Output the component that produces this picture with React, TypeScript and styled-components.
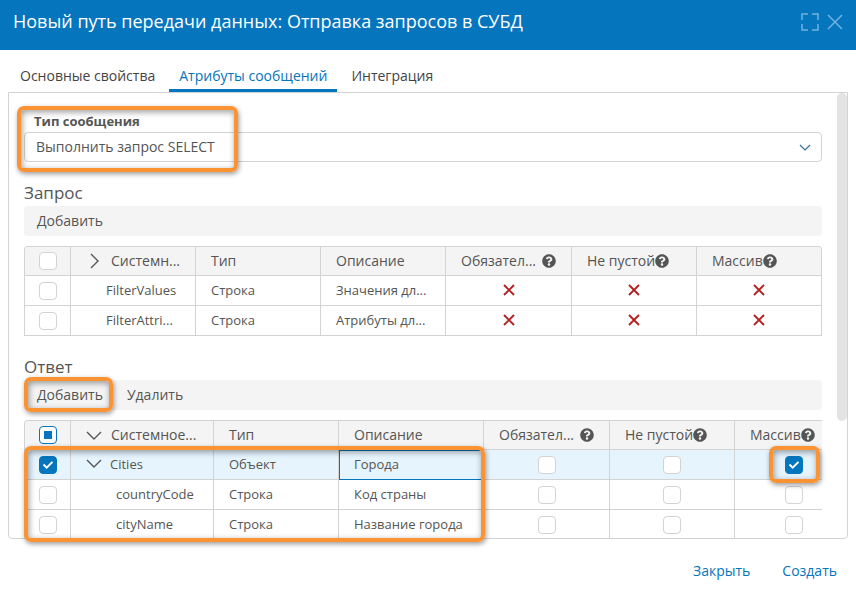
import React, { useEffect, useRef, useState } from "react";
import styled, { createGlobalStyle, css } from "styled-components";
import { FaQuestionCircle } from "react-icons/fa";

const BLUE = "#0575bd";
const LINE = "#d3d3d3";
const TEXT = "#555555";

const GlobalStyle = createGlobalStyle`
  *, *::before, *::after { box-sizing: border-box; }
  body { margin: 0; background: #fff; color: ${TEXT}; font: 14px/20px "Open Sans", sans-serif; }
  button, select, input { font: inherit; color: inherit; margin: 0; }
  button { border: 0; background: none; padding: 0; cursor: pointer; }
`;

const Dialog = styled.main`
  display: flex;
  flex-direction: column;
  height: 100vh;
`;

const Header = styled.header`
  display: flex;
  justify-content: space-between;
  align-items: center;
  padding: 7px 13px 13px;
  background: ${BLUE};
`;

const Title = styled.h1`
  margin: 0;
  padding-bottom: 2px;
  font-size: 18px;
  line-height: 28px;
  font-weight: 500;
  color: #fff;
`;

const HeaderActions = styled.div`
  display: flex;
  align-items: center;
  gap: 8px;
`;

const IconButton = styled.button`
  display: flex;
  color: #72b3de;
`;

const Tabs = styled.div`
  display: flex;
  gap: 4px;
  padding: 12px 10px 0;
`;

const Tab = styled.button<{ $active?: boolean }>`
  height: 30px;
  padding: 0 10px;
  white-space: nowrap;
  color: ${(p) => (p.$active ? BLUE : "#444")};
  border-bottom: 3px solid ${(p) => (p.$active ? BLUE : "transparent")};
`;

const Panel = styled.section`
  position: relative;
  flex: 1;
  min-height: 0;
  margin: 0 8px;
  border: 1px solid ${LINE};
  border-radius: 0 0 4px 4px;
`;

const Scroller = styled.div`
  height: 100%;
  overflow: hidden;
  padding: 17px 25px 0 15px;
`;

const ScrollThumb = styled.div`
  position: absolute;
  top: 0;
  right: 0;
  width: 10px;
  height: 328px;
  border-radius: 5px;
  background: #e3e3e3;
`;

const FieldLabel = styled.label`
  display: block;
  padding-left: 10px;
  font-size: 13px;
  line-height: 22px;
  font-weight: 700;
`;

const SelectBox = styled.div`
  display: grid;
  align-items: center;
  > * { grid-area: 1 / 1; }
  > svg { justify-self: end; margin-right: 11px; color: #33709c; pointer-events: none; }
`;

const Select = styled.select`
  appearance: none;
  width: 100%;
  height: 30px;
  padding: 0 30px 0 11px;
  border: 1px solid ${LINE};
  border-radius: 4px;
  background: #fff;
`;

const SectionTitle = styled.h2`
  margin: 18px 0 0;
  font-size: 17px;
  line-height: 26px;
  font-weight: 400;
`;

const Toolbar = styled.div`
  display: flex;
  gap: 24px;
  height: 30px;
  padding: 0 13px;
  margin-bottom: 10px;
  border-radius: 4px;
  background: #f4f4f4;
`;

const TableFrame = styled.div<{ $cut?: boolean }>`
  overflow: hidden;
  border: 1px solid ${LINE};
  border-bottom: 0;
  border-radius: 4px 4px 0 0;
  ${(p) => p.$cut && css`border-right: 0; border-top-right-radius: 0;`}
`;

const Table = styled.table<{ $width: string }>`
  table-layout: fixed;
  width: ${(p) => p.$width};
  border-spacing: 0;
`;

const Col = styled.col<{ $width: number }>`
  width: ${(p) => p.$width}px;
`;

const cell = css`
  padding: 0 0 0 15px;
  text-align: left;
  font-weight: 400;
  white-space: nowrap;
  overflow: hidden;
  border-right: 1px solid ${LINE};
  border-bottom: 1px solid ${LINE};
  &:last-child { border-right: 0; }
`;

const HeadCell = styled.th<{ $center?: boolean }>`
  ${cell}
  height: 29px;
  background: #f4f4f4;
  ${(p) => p.$center && css`padding: 0;`}
`;

const Row = styled.tr<{ $selected?: boolean }>`
  background: ${(p) => (p.$selected ? "#e6f4fe" : "#fff")};
`;

const Cell = styled.td<{ $center?: boolean; $focused?: boolean }>`
  ${cell}
  height: 30px;
  padding-bottom: 2px;
  font-size: 13px;
  ${(p) => p.$center && css`padding: 0;`}
  ${(p) => p.$focused && css`
    border-color: ${BLUE};
    box-shadow: inset 1px 1px 0 ${BLUE};
  `}
`;

const Center = styled.div<{ $raised?: boolean }>`
  display: flex;
  justify-content: center;
  align-items: center;
  padding-bottom: ${(p) => (p.$raised ? 2 : 0)}px;
`;

const Name = styled.div<{ $indent: number }>`
  display: flex;
  align-items: center;
  padding-left: ${(p) => p.$indent}px;
`;

const Toggle = styled.button<{ $wide?: boolean }>`
  display: flex;
  justify-content: center;
  width: 16px;
  margin-right: ${(p) => (p.$wide ? 9 : 8)}px;
`;

const HelpLabel = styled.div<{ $gap?: boolean }>`
  display: flex;
  align-items: center;
  gap: ${(p) => (p.$gap ? 6 : 0)}px;
`;

const CheckWrap = styled.span`
  display: grid;
  place-items: center;
  width: 18px;
  height: 18px;
  > * { grid-area: 1 / 1; }
  > svg { pointer-events: none; }
`;

const CheckInput = styled.input`
  appearance: none;
  width: 18px;
  height: 18px;
  border: 1px solid ${LINE};
  border-radius: 4px;
  background: #fff;
  &:checked { border-color: ${BLUE}; background: ${BLUE}; }
  &:indeterminate { border-color: ${BLUE}; background: #fff; }
`;

const Footer = styled.footer`
  display: flex;
  justify-content: flex-end;
  gap: 32px;
  height: 55px;
  padding: 0 19px 0 0;
`;

const LinkButton = styled.button`
  height: 64px;
  color: ${BLUE};
`;

const Highlight = styled.div<{ $x: number; $y: number; $w: number; $h: number }>`
  position: absolute;
  left: ${(p) => p.$x}px;
  top: ${(p) => p.$y}px;
  width: ${(p) => p.$w}px;
  height: ${(p) => p.$h}px;
  border: 4px solid #fb9332;
  border-radius: 7px;
  box-shadow: 1px 2px 5px rgba(0, 0, 0, 0.4), inset 1px 2px 6px rgba(0, 0, 0, 0.4);
  pointer-events: none;
`;

function Chevron({ w, h, d, stroke = 1.4 }: { w: number; h: number; d: string; stroke?: number }) {
  return (
    <svg width={w} height={h} viewBox={`0 0 ${w} ${h}`} fill="none" stroke="currentColor" strokeWidth={stroke} aria-hidden="true">
      <path d={d} />
    </svg>
  );
}

const ChevronRight = () => <Chevron w={9} h={16} d="M1 1l7 7-7 7" />;
const ChevronDown = () => <Chevron w={16} h={9} d="M1 1l7 7 7-7" />;

function Check({ label, checked = false, mixed = false }: { label: string; checked?: boolean; mixed?: boolean }) {
  const [on, setOn] = useState(checked);
  const [part, setPart] = useState(mixed);
  const ref = useRef<HTMLInputElement>(null);
  useEffect(() => {
    if (ref.current) ref.current.indeterminate = part;
  }, [part]);
  return (
    <CheckWrap>
      <CheckInput
        ref={ref}
        type="checkbox"
        aria-label={label}
        checked={on}
        onChange={(e) => {
          setPart(false);
          setOn(e.target.checked);
        }}
      />
      {part && (
        <svg width="8" height="8" viewBox="0 0 8 8" aria-hidden="true">
          <rect width="8" height="8" fill={BLUE} />
        </svg>
      )}
      {on && !part && (
        <svg width="12" height="10" viewBox="0 0 12 10" fill="none" stroke="#fff" strokeWidth="2" aria-hidden="true">
          <path d="M1.5 4.5l3.2 3.2 5.8-5.8" />
        </svg>
      )}
    </CheckWrap>
  );
}

const RedCross = () => (
  <svg width="12" height="12" viewBox="0 0 12 12" stroke="#b5201f" strokeWidth="1.9" role="img" aria-label="Нет">
    <path d="M1 1l10 10M11 1l-10 10" />
  </svg>
);

function Help({ text, gap }: { text: string; gap?: boolean }) {
  return (
    <HelpLabel $gap={gap}>
      {text}
      <FaQuestionCircle size={14} />
    </HelpLabel>
  );
}

function TableHead({ name, open, mixed }: { name: string; open?: boolean; mixed?: boolean }) {
  return (
    <thead>
      <tr>
        <HeadCell $center>
          <Center><Check label="Выбрать все" mixed={mixed} /></Center>
        </HeadCell>
        <HeadCell>
          <Name $indent={0}>
            <Toggle $wide aria-label="Развернуть">{open ? <ChevronDown /> : <ChevronRight />}</Toggle>
            {name}
          </Name>
        </HeadCell>
        <HeadCell>Тип</HeadCell>
        <HeadCell>Описание</HeadCell>
        <HeadCell><Help text="Обязател..." gap /></HeadCell>
        <HeadCell><Help text="Не пустой" /></HeadCell>
        <HeadCell><Help text="Массив" /></HeadCell>
      </tr>
    </thead>
  );
}

const flags = ["Обязательный", "Не пустой", "Массив"];

const requestRows = [
  { name: "FilterValues", type: "Строка", note: "Значения дл..." },
  { name: "FilterAttri...", type: "Строка", note: "Атрибуты дл..." },
];

const responseRows = [
  { name: "Cities", type: "Объект", note: "Города", root: true },
  { name: "countryCode", type: "Строка", note: "Код страны", root: false },
  { name: "cityName", type: "Строка", note: "Название города", root: false },
];

const requestCols = [46, 125, 125, 125, 126, 125, 124];
const responseCols = [46, 143, 125, 145, 126, 125, 118];

const Cols = ({ widths }: { widths: number[] }) => (
  <colgroup>
    {widths.map((w, i) => <Col key={i} $width={w} />)}
  </colgroup>
);

export default function App() {
  return (
    <>
      <GlobalStyle />
      <Dialog>
        <Header>
          <Title>Новый путь передачи данных: Отправка запросов в СУБД</Title>
          <HeaderActions>
            <IconButton aria-label="Во весь экран">
              <svg width="18" height="18" viewBox="0 0 18 18" fill="none" stroke="currentColor" strokeWidth="1.5">
                <path d="M1 7V1h6M11 1h6v6M17 11v6h-6M7 17H1v-6" />
              </svg>
            </IconButton>
            <IconButton aria-label="Закрыть окно">
              <svg width="16" height="16" viewBox="0 0 16 16" fill="none" stroke="currentColor" strokeWidth="1.5">
                <path d="M1 1l14 14M15 1L1 15" />
              </svg>
            </IconButton>
          </HeaderActions>
        </Header>

        <Tabs role="tablist">
          <Tab role="tab">Основные свойства</Tab>
          <Tab role="tab" aria-selected="true" $active>Атрибуты сообщений</Tab>
          <Tab role="tab">Интеграция</Tab>
        </Tabs>

        <Panel>
          <Scroller>
            <FieldLabel htmlFor="message-type">Тип сообщения</FieldLabel>
            <SelectBox>
              <Select id="message-type">
                <option>Выполнить запрос SELECT</option>
              </Select>
              <Chevron w={12} h={7} d="M1 1l5 5 5-5" stroke={1.2} />
            </SelectBox>

            <SectionTitle>Запрос</SectionTitle>
            <Toolbar>
              <button>Добавить</button>
            </Toolbar>
            <TableFrame>
              <Table $width="100%">
                <Cols widths={requestCols} />
                <TableHead name="Системн..." />
                <tbody>
                  {requestRows.map((r) => (
                    <Row key={r.name}>
                      <Cell $center><Center><Check label={r.name} /></Center></Cell>
                      <Cell><Name $indent={20}>{r.name}</Name></Cell>
                      <Cell>{r.type}</Cell>
                      <Cell>{r.note}</Cell>
                      {flags.map((f) => (
                        <Cell key={f} $center><Center $raised><RedCross /></Center></Cell>
                      ))}
                    </Row>
                  ))}
                </tbody>
              </Table>
            </TableFrame>

            <SectionTitle>Ответ</SectionTitle>
            <Toolbar>
              <button>Добавить</button>
              <button>Удалить</button>
            </Toolbar>
            <TableFrame $cut>
              <Table $width="828px">
                <Cols widths={responseCols} />
                <TableHead name="Системное..." open mixed />
                <tbody>
                  {responseRows.map((r) => (
                    <Row key={r.name} $selected={r.root}>
                      <Cell $center><Center><Check label={r.name} checked={r.root} /></Center></Cell>
                      <Cell>
                        <Name $indent={r.root ? 0 : 30}>
                          {r.root && <Toggle aria-label="Свернуть"><ChevronDown /></Toggle>}
                          {r.name}
                        </Name>
                      </Cell>
                      <Cell>{r.type}</Cell>
                      <Cell $focused={r.root}>{r.note}</Cell>
                      {flags.map((f) => (
                        <Cell key={f} $center>
                          <Center><Check label={`${r.name}: ${f}`} checked={r.root && f === "Массив"} /></Center>
                        </Cell>
                      ))}
                    </Row>
                  ))}
                </tbody>
              </Table>
            </TableFrame>
          </Scroller>
          <ScrollThumb />
          <Highlight $x={8} $y={13} $w={221} $h={66} />
          <Highlight $x={15} $y={284} $w={89} $h={35} />
          <Highlight $x={15} $y={353} $w={461} $h={96} />
          <Highlight $x={760} $y={353} $w={51} $h={37} />
        </Panel>

        <Footer>
          <LinkButton>Закрыть</LinkButton>
          <LinkButton>Создать</LinkButton>
        </Footer>
      </Dialog>
    </>
  );
}
